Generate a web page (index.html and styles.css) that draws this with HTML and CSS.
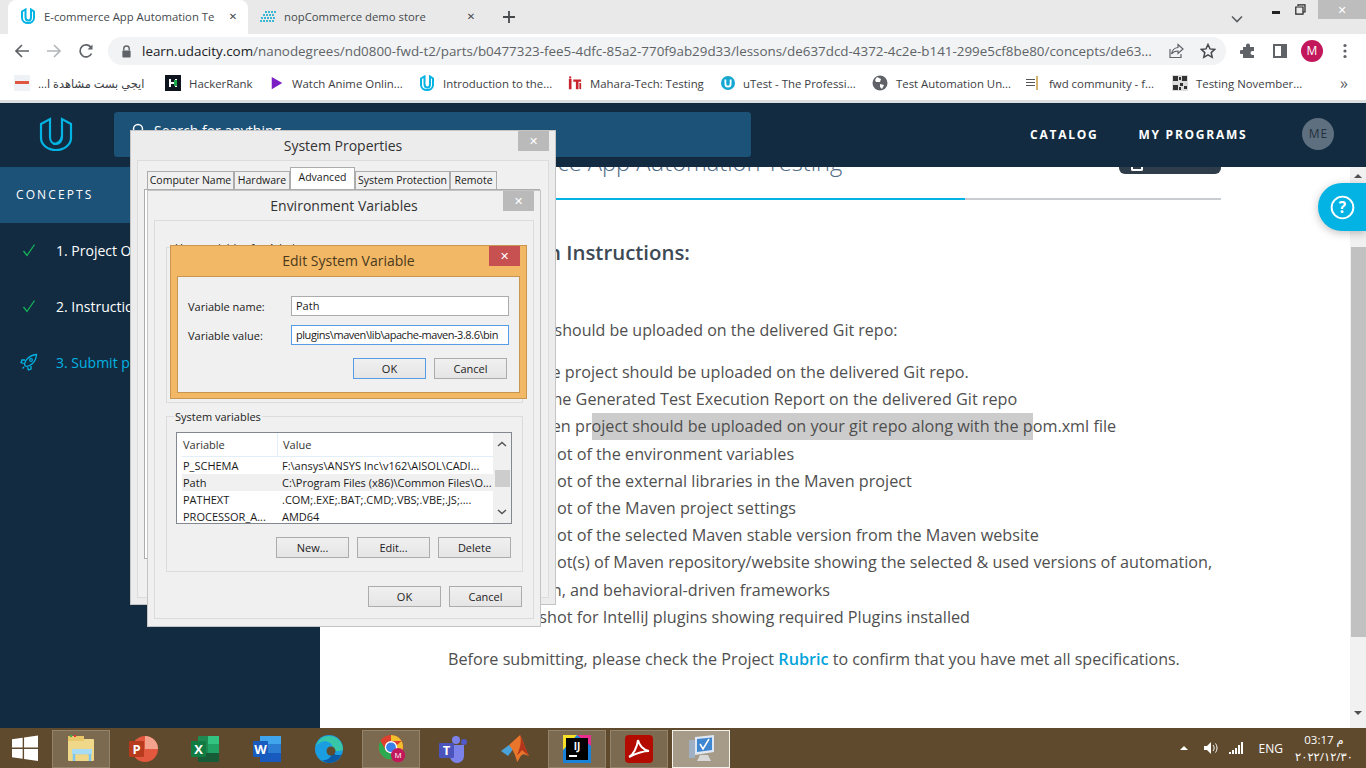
FILE: index.html
```html
<!DOCTYPE html>
<html lang="en">
<head>
<meta charset="utf-8">
<title>E-commerce App Automation Testing</title>
<link rel="stylesheet" href="styles.css">
</head>
<body>
<div class="screen">
  <div class="tabstrip">
    <div class="tab active">
      <svg class="fav" viewBox="0 0 16 16"><path d="M2 3.500 5.500 1.500V9c0 2 1.200 3.500 3 3.500S11 11.500 11 9V1.500L14 3.500V10c0 3-2.800 5-6 5s-6-2-6-5Z" fill="none" stroke="#02b3e4" stroke-width="2"/></svg>
      <span class="tabtitle">E-commerce App Automation Te</span>
      <span class="tabx">✕</span>
    </div>
    <div class="tab">
      <svg class="fav" viewBox="0 0 16 16"><g fill="#3cb8d4"><rect x="5" y="3" width="2" height="2"/><rect x="8" y="3" width="2" height="2"/><rect x="11" y="3" width="2" height="2"/><rect x="14" y="3" width="2" height="2"/><rect x="3" y="6" width="2" height="2"/><rect x="6" y="6" width="2" height="2"/><rect x="9" y="6" width="2" height="2"/><rect x="12" y="6" width="2" height="2"/><rect x="1" y="9" width="2" height="2"/><rect x="4" y="9" width="2" height="2"/><rect x="7" y="9" width="2" height="2"/><rect x="10" y="9" width="2" height="2"/><rect x="13" y="9" width="2" height="2"/><rect x="0" y="12" width="2" height="2"/><rect x="3" y="12" width="2" height="2"/><rect x="6" y="12" width="2" height="2"/><rect x="9" y="12" width="2" height="2"/><rect x="12" y="12" width="2" height="2"/></g></svg>
      <span class="tabtitle">nopCommerce demo store</span>
      <span class="tabx">✕</span>
    </div>
    <svg class="newtab" viewBox="0 0 14 14"><path d="M7 1v12M1 7h12" stroke="#45494d" stroke-width="1.800"/></svg>
    <div class="winctl">
      <svg class="chev" viewBox="0 0 12 8"><path d="M1 1.500 6 6.500 11 1.500" fill="none" stroke="#5a5d60" stroke-width="1.600"/></svg>
      <span class="minbtn"></span>
      <svg class="restore" viewBox="0 0 11 11"><path d="M3 2V.8H10V8H8.500M.8 3H8V10.200H.8Z" fill="none" stroke="#222" stroke-width="1.200"/></svg>
      <span class="closebtn">✕</span>
    </div>
  </div>

  <div class="toolbar">
    <svg class="tool" viewBox="0 0 16 16"><path d="M15 8H2M8 2 2 8l6 6" fill="none" stroke="#5f6368" stroke-width="1.700"/></svg>
    <svg class="tool" viewBox="0 0 16 16"><path d="M1 8h13M8 2l6 6-6 6" fill="none" stroke="#b4b7ba" stroke-width="1.700"/></svg>
    <svg class="tool" viewBox="0 0 16 16"><path d="M13.500 10.500A6 6 0 1 1 13 4.500" fill="none" stroke="#5f6368" stroke-width="1.700"/><path d="M14.500 1.500v5h-5Z" fill="#5f6368"/></svg>
    <div class="omnibox">
      <svg class="lock" viewBox="0 0 12 14"><path d="M3 6V4a3 3 0 0 1 6 0v2" fill="none" stroke="#5f6368" stroke-width="1.500"/><rect x="1.500" y="6" width="9" height="7.500" rx="1" fill="#5f6368"/></svg>
      <span class="url"><b>learn.udacity.com</b>/nanodegrees/nd0800-fwd-t2/parts/b0477323-fee5-4dfc-85a2-770f9ab29d33/lessons/de637dcd-4372-4c2e-b141-299e5cf8be80/concepts/de63...</span>
      <svg class="omni-ic" viewBox="0 0 16 16"><path d="M10 1.500 15 6l-5 4.500V8C7 8 5 9 3.500 11 4 7.500 6 5 10 4.500ZM2 6v8.500h11V11" fill="none" stroke="#5f6368" stroke-width="1.200"/></svg>
      <svg class="omni-ic" viewBox="0 0 16 16"><path d="m8 1.500 2 4.400 4.800.5-3.600 3.200 1 4.700L8 11.900l-4.200 2.400 1-4.700L1.200 6.400 6 5.900Z" fill="none" stroke="#45494d" stroke-width="1.500"/></svg>
    </div>
    <svg class="tool ext" viewBox="0 0 16 16"><path d="M6 2.500a2 2 0 0 1 4 0V4h4v4h-1.500a2 2 0 0 0 0 4H14v3H3v-4H1.500a2 2 0 0 1 0-4H3V4h3Z" fill="#5f6368"/></svg>
    <svg class="tool" viewBox="0 0 16 16"><rect x="2" y="2" width="12" height="12" fill="none" stroke="#5f6368" stroke-width="2"/><rect x="9" y="2" width="5" height="12" fill="#5f6368"/></svg>
    <span class="profile">M</span>
    <svg class="tool dots" viewBox="0 0 4 16"><circle cx="2" cy="2.500" r="1.600" fill="#5f6368"/><circle cx="2" cy="8" r="1.600" fill="#5f6368"/><circle cx="2" cy="13.500" r="1.600" fill="#5f6368"/></svg>
  </div>

  <div class="bookmarks">
    <div class="bm"><svg class="bmi" viewBox="0 0 16 16"><rect width="16" height="16" fill="#eef1f5"/><rect x="1" y="6" width="14" height="3" fill="#e0553f"/></svg><span dir="rtl">ايجي بست مشاهدة ا...</span></div>
    <div class="bm"><svg class="bmi" viewBox="0 0 16 16"><rect width="16" height="16" fill="#0e141e"/><path d="M4 4h2v8H4zM10 4h2v8h-2zM6 7h4v2H6z" fill="#fff"/><rect x="9" y="5" width="3" height="6" fill="#1ba94c"/></svg><span>HackerRank</span></div>
    <div class="bm"><svg class="bmi nar" viewBox="0 0 16 16"><path d="M2 1 14 8 2 15Z" fill="#7b1fc4"/></svg><span>Watch Anime Onlin...</span></div>
    <div class="bm"><svg class="bmi" viewBox="0 0 16 16"><path d="M2 3.500 5.500 1.500V9c0 2 1.200 3.500 3 3.500S11 11.500 11 9V1.500L14 3.500V10c0 3-2.800 5-6 5s-6-2-6-5Z" fill="none" stroke="#02b3e4" stroke-width="2"/></svg><span>Introduction to the...</span></div>
    <div class="bm"><svg class="bmi nar" viewBox="0 0 16 16"><path d="M1 3h3v12H1zM6 4h9v2.500h-3V15H9V6.500H6z" fill="#c8232c"/><circle cx="2.500" cy="1.500" r="1.300" fill="#c8232c"/><rect x="13" y="8" width="2" height="7" fill="#c8232c"/></svg><span>Mahara-Tech: Testing</span></div>
    <div class="bm"><svg class="bmi nar" viewBox="0 0 16 16"><circle cx="8" cy="8" r="8" fill="#16a7d1"/><path d="M5 4v5c0 2 1.300 3 3 3s3-1 3-3V4" fill="none" stroke="#fff" stroke-width="2"/></svg><span>uTest - The Professi...</span></div>
    <div class="bm"><svg class="bmi" viewBox="0 0 16 16"><circle cx="8" cy="8" r="7.500" fill="#5f6368"/><path d="M5 2 9 4 8 7 4 7 3 5ZM8 9l4 1-2 4-2-2Z" fill="#fff"/></svg><span>Test Automation Un...</span></div>
    <div class="bm"><svg class="bmi" viewBox="0 0 16 16"><path d="M1 4h9v1H1zM1 7h9v1H1zM1 10h9v1H1z" fill="#555"/><path d="M12 1v14" stroke="#c69a3c" stroke-width="1.500"/></svg><span>fwd community - f...</span></div>
    <div class="bm"><svg class="bmi" viewBox="0 0 16 16"><rect width="16" height="16" fill="#ddd"/><path d="M1 1h5v5H1zM10 1h5v5h-5zM1 10h5v5H1zM8 8h3v3H8zM12 11h3v3h-3zM7 2h2v3H7zM7 12h2v3H7z" fill="#333"/></svg><span>Testing November...</span></div>
    <span class="more">»</span>
  </div>

  <div class="page">
    <header class="apphead">
      <svg class="logo" viewBox="0 0 34 36"><path d="M2 8 11 3V21c0 4 2.500 7 6 7s6-3 6-7V3L32 8V22c0 7-7 12-15 12S2 29 2 22Z" fill="none" stroke="#02b3e4" stroke-width="2.200"/><path d="M23 20c-1 5-4 8-9 8" fill="none" stroke="#02b3e4" stroke-width="2"/></svg>
      <div class="search"><svg class="sicon" viewBox="0 0 14 14"><circle cx="6" cy="6" r="4.500" fill="none" stroke="#fff" stroke-width="1.500"/></svg><span>Search for anything</span></div>
      <nav class="topnav"><span>CATALOG</span><span>MY PROGRAMS</span></nav>
      <span class="avatar">ME</span>
    </header>
    <div class="below">
      <aside class="side">
        <div class="sidehead">CONCEPTS</div>
        <div class="sideitem"><svg class="sideic" viewBox="0 0 14 14"><path d="M1.500 8 5 12.500 12.500 1.500" fill="none" stroke="#15b45a" stroke-width="1.300"/></svg><span>1. Project Overview</span></div>
        <div class="sideitem"><svg class="sideic" viewBox="0 0 14 14"><path d="M1.500 8 5 12.500 12.500 1.500" fill="none" stroke="#15b45a" stroke-width="1.300"/></svg><span>2. Instructions</span></div>
        <div class="sideitem now"><svg class="sideic rocket" viewBox="0 0 18 18"><path d="M5 13C3.500 9 8 2.500 16.500 1.500 16 9.500 9.500 14.500 5 13ZM5 7H2L1 9.500 3.800 10.500M11 13v3l-2.500 1-1-2.800M4 14 2.500 15.500" fill="none" stroke="#02b3e4" stroke-width="1.300"/><circle cx="11" cy="7" r="1.400" fill="none" stroke="#02b3e4" stroke-width="1.100"/></svg><span>3. Submit project</span></div>
      </aside>
      <main class="content">
        <div class="column">
          <div class="titlerow">
            <span class="lessontitle">E-commerce App Automation Testing</span>
            <span class="darkbtn"><i class="btnmark"></i></span>
          </div>
          <div class="progress"><div class="progressfill"></div></div>
          <h2 class="heading">Submission Instructions:</h2>
          <p class="lead">The following should be uploaded on the delivered Git repo:</p>
          <ul class="reqs">
            <li class="firstreq">The whole project should be uploaded on the delivered Git repo.</li>
            <li>Upload the Generated Test Execution Report on the delivered Git repo</li>
            <li>The Maven pr<mark class="sel">oject should be uploaded on your git repo along with the p</mark>om.xml file</li>
            <li>Screenshot of the environment variables</li>
            <li>Screenshot of the external libraries in the Maven project</li>
            <li>Screenshot of the Maven project settings</li>
            <li>Screenshot of the selected Maven stable version from the Maven website</li>
            <li>Screenshot(s) of Maven repository/website showing the selected &amp; used versions of automation, validation, and behavioral-driven frameworks</li>
            <li>Screenshot for IntelliJ plugins showing required Plugins installed</li>
          </ul>
          <p class="closing">Before submitting, please check the Project <b class="rubric">Rubric</b><span class="after"> to confirm that you have met all specifications.</span></p>
        </div>
        <div class="scrollbar"><span class="sarrow up"></span><span class="sthumb"></span><span class="sarrow down"></span></div>
      </main>
    </div>
    <div class="fab"><svg viewBox="0 0 26 26"><circle cx="13" cy="13" r="11.300" fill="none" stroke="#fff" stroke-width="2"/><text x="13" y="18.500" text-anchor="middle" class="fabq">?</text></svg></div>
  </div>

  <footer class="taskbar">
    <svg class="start" viewBox="0 0 28 28"><path d="M0 4.500 11.500 3v10.500H0ZM13 2.700 28 .5v13H13ZM0 15h11.500v10.500L0 24ZM13 15h15v13L13 25.800Z" fill="#fff"/></svg>
    <div class="tb on"><svg viewBox="0 0 30 30"><rect x="2" y="5" width="26" height="22" rx="1" fill="#f0d88a"/><rect x="2" y="2" width="16" height="5" fill="#e8c66a"/><rect x="4" y="1" width="2" height="2" fill="#3cb043"/><rect x="8" y="1" width="2" height="2" fill="#d33"/><path d="M8 19h16M8 27v-8h3M24 27v-8h-3" fill="none" stroke="#7cc6ee" stroke-width="2.500"/><rect x="6" y="15" width="20" height="5" fill="#a8dcf5"/></svg></div>
    <div class="tb"><svg viewBox="0 0 30 30"><circle cx="17" cy="15" r="13" fill="#e2583e"/><path d="M17 2a13 13 0 0 1 13 13H17Z" fill="#f3a28d"/><rect x="1" y="7" width="15" height="16" rx="1" fill="#b83b1d"/><text x="8.500" y="20" class="tbl">P</text></svg></div>
    <div class="tb"><svg viewBox="0 0 30 30"><rect x="8" y="2" width="21" height="26" rx="1" fill="#1f8a52"/><rect x="18" y="2" width="11" height="8" fill="#33c481"/><rect x="18" y="10" width="11" height="9" fill="#21a366"/><rect x="8" y="19" width="21" height="9" fill="#185c37"/><rect x="1" y="7" width="15" height="16" rx="1" fill="#107c41"/><text x="8.500" y="20" class="tbl">X</text></svg></div>
    <div class="tb"><svg viewBox="0 0 30 30"><rect x="8" y="2" width="21" height="26" rx="1" fill="#2b7cd3"/><rect x="8" y="2" width="21" height="8" fill="#41a5ee"/><rect x="8" y="19" width="21" height="9" fill="#185abd"/><rect x="1" y="7" width="15" height="16" rx="1" fill="#185abd"/><text x="8.500" y="20" class="tbl">W</text></svg></div>
    <div class="tb"><svg viewBox="0 0 30 30"><circle cx="15" cy="15" r="14" fill="#1b9de2"/><path d="M29 16c0-8-6-14-14-14C7 2 4 7 2 12c4-5 10-6 14-3 3 2 3 5 2 6 2 2 7 3 11 1Z" fill="#37c6a8"/><path d="M18 15c0 4 3 6 6 6 2 0 3 0 4-1-2 5-7 9-13 9-3 0-5-1-7-3 5 1 11-2 10-11Z" fill="#0c59a4"/><circle cx="17" cy="17" r="4.500" fill="#5f4a2e"/></svg></div>
    <div class="tb on"><svg viewBox="0 0 30 34"><circle cx="15" cy="15" r="14" fill="#de3f2e"/><path d="M15 1a14 14 0 0 1 12 7H15Z" fill="#f2c02c"/><path d="M27 8a14 14 0 0 1-9 20L13 20Z" fill="#f2c02c"/><path d="M3 8a14 14 0 0 0 13 21L20 20H10Z" fill="#2da94f"/><circle cx="15" cy="15" r="7" fill="#fff"/><circle cx="15" cy="15" r="5.500" fill="#3b80ea"/><circle cx="23" cy="24" r="8" fill="#c2185b"/><text x="23" y="27.500" class="tbm">M</text></svg></div>
    <div class="tb"><svg viewBox="0 0 30 30"><circle cx="18" cy="6" r="4" fill="#7b83eb"/><circle cx="26" cy="8" r="3" fill="#5059c9"/><path d="M11 11h15v11a7 7 0 0 1-14 0Z" fill="#7b83eb"/><rect x="1" y="9" width="15" height="15" rx="1" fill="#4b53bc"/><text x="8.500" y="21" class="tbl">T</text></svg></div>
    <div class="tb"><svg viewBox="0 0 30 30"><path d="M1 17 9 11 14 14 8 22Z" fill="#4aa3d8"/><path d="M9 11 20 1c2 2 5 14 9 21-3-1-5-3-7-1-2 1-3 5-5 7-1-5-3-11-8-17Z" fill="#e8752a"/><path d="M20 1c2 6 0 14-3 20 2-1 3-3 5-5 2 2 5 4 7 6-4-7-7-19-9-21Z" fill="#b5341c"/></svg></div>
    <div class="tb on"><svg viewBox="0 0 30 30"><rect x="1" y="1" width="28" height="28" fill="#1a82d8"/><path d="M1 1h28L29 12 15 1Z" fill="#e82f8e"/><path d="M1 1h14L1 16Z" fill="#f8e02a"/><rect x="4" y="4" width="22" height="22" fill="#000"/><text x="15" y="16" class="tbij">IJ</text><rect x="7" y="21" width="8" height="2" fill="#fff"/></svg></div>
    <div class="tb on"><svg viewBox="0 0 30 30"><rect x="1" y="1" width="28" height="28" rx="4" fill="#b30b00"/><path d="M5 23c4-2 8-9 9-17 1 5 5 10 11 11-6 0-12 2-20 6Z" fill="none" stroke="#fff" stroke-width="2"/></svg></div>
    <div class="tb on lit"><svg viewBox="0 0 30 30"><path d="M9 3 28 1v17L9 21Z" fill="#dfe8f2"/><path d="M11 5 26 3.500V16L11 18Z" fill="#3e86d0"/><path d="m14 10 3 5 6-10" fill="none" stroke="#fff" stroke-width="1.500"/><path d="M3 6h6v18H3Z" fill="#9fb0c4"/><path d="M14 21h8l3 6H11Z" fill="#d8d8d8"/></svg></div>
    <div class="tray">
      <span class="trayup"></span>
      <svg class="trayic" viewBox="0 0 16 14"><path d="M1 5h3l4-4v12L4 9H1Z" fill="#fff"/><path d="M10 4c1.500 2 1.500 4 0 6M12.500 2.500c2 3 2 6 0 9" fill="none" stroke="#fff"/></svg>
      <svg class="trayic" viewBox="0 0 16 14"><path d="M1 11h2v2H1zM4 9h2v4H4zM7 7h2v6H7zM10 4h2v9h-2zM13 1h2v12h-2z" fill="#fff"/></svg>
      <span class="lang">ENG</span>
      <div class="clock"><span dir="rtl">م 03:17</span><span>٢٠٢٢/١٢/٣٠</span></div>
    </div>
  </footer>

  <section class="win props">
    <div class="wintitle"><span>System Properties</span><span class="wx grey">✕</span></div>
    <div class="propbody">
      <div class="tabs">
        <span class="wtab cn">Computer Name</span><span class="wtab hw">Hardware</span><span class="wtab sel">Advanced</span><span class="wtab sp">System Protection</span><span class="wtab rm">Remote</span>
      </div>
      <div class="tabpanel"></div>
    </div>
  </section>

  <section class="win env">
    <div class="wintitle"><span>Environment Variables</span><span class="wx grey">✕</span></div>
    <div class="envbody">
      <div class="group usergroup"><span class="legend">User variables for Admin</span></div>
      <div class="group sysgroup">
        <span class="legend">System variables</span>
        <div class="listbox">
          <div class="listmain">
            <div class="lrow lhead"><span class="c1">Variable</span><span class="c2">Value</span></div>
            <div class="lrow"><span class="c1">P_SCHEMA</span><span class="c2">F:\ansys\ANSYS Inc\v162\AISOL\CADI...</span></div>
            <div class="lrow hl"><span class="c1">Path</span><span class="c2">C:\Program Files (x86)\Common Files\O...</span></div>
            <div class="lrow"><span class="c1">PATHEXT</span><span class="c2">.COM;.EXE;.BAT;.CMD;.VBS;.VBE;.JS;....</span></div>
            <div class="lrow"><span class="c1">PROCESSOR_A...</span><span class="c2">AMD64</span></div>
          </div>
          <div class="lscroll">
            <svg viewBox="0 0 10 6"><path d="M1 5 5 1.500 9 5" fill="none" stroke="#555" stroke-width="1.500"/></svg>
            <span class="lthumb"></span>
            <svg viewBox="0 0 10 6"><path d="M1 1 5 4.500 9 1" fill="none" stroke="#555" stroke-width="1.500"/></svg>
          </div>
        </div>
        <div class="btnrow sysbtns"><span class="wbtn">New...</span><span class="wbtn">Edit...</span><span class="wbtn">Delete</span></div>
      </div>
      <div class="btnrow envbtns"><span class="wbtn">OK</span><span class="wbtn">Cancel</span></div>
    </div>
  </section>

  <section class="win edit">
    <div class="wintitle edittitle"><span>Edit System Variable</span><span class="wx red">✕</span></div>
    <div class="editbody">
      <div class="field"><label>Variable name:</label><span class="input">Path</span></div>
      <div class="field"><label>Variable value:</label><span class="input focus tight">plugins\maven\lib\apache-maven-3.8.6\bin</span></div>
      <div class="btnrow editbtns"><span class="wbtn def">OK</span><span class="wbtn">Cancel</span></div>
    </div>
  </section>
</div>
</body>
</html>
```
FILE: styles.css
```css
* { box-sizing: border-box; }
html, body { margin: 0; height: 100%; overflow: hidden; }
body { font-family: "Open Sans", "DejaVu Sans", sans-serif; color: #333; }
.screen { position: relative; width: 1366px; height: 768px; display: flex; flex-direction: column; overflow: hidden; background: #fff; }

/* browser chrome */
.tabstrip { height: 34px; background: #e9e9e9; display: flex; align-items: stretch; padding-left: 8px; font-size: 11.300px; flex: none; }
.tab { width: 240px; display: flex; align-items: center; padding: 0 8px 2px 12px; gap: 8px; color: #45494d; }
.tab.active { background: #fff; border-radius: 8px 8px 0 0; }
.tab + .tab { width: 238px; }
.fav { width: 16px; height: 16px; flex: none; }
.tabtitle { flex: 1; white-space: nowrap; overflow: hidden; }
.tabx { font-size: 10px; color: #45494d; width: 14px; text-align: center; }
.newtab { width: 14px; height: 14px; align-self: center; margin-left: 16px; }
.winctl { margin-left: auto; display: flex; align-items: flex-start; }
.chev { width: 12px; height: 8px; margin: 15px 29px 0 0; }
.minbtn { width: 8px; height: 3px; background: #222; margin: 11px 15px 0 0; }
.restore { width: 11px; height: 11px; margin: 4px 12px 0 0; }
.closebtn { width: 48px; height: 19px; background: #bdbdbd; color: #fff; font-size: 11px; text-align: center; line-height: 19px; }
.toolbar { height: 34px; background: #fff; display: flex; align-items: center; padding-left: 14px; flex: none; }
.tool { width: 16px; height: 16px; margin-right: 16px; flex: none; }
.omnibox { width: 1118px; height: 28px; margin-left: -2px; background: #f1f3f4; border-radius: 14px; display: flex; align-items: center; padding: 0 10px 0 13px; flex: none; }
.lock { width: 11px; height: 13px; margin-right: 10px; flex: none; }
.url { flex: 1; font-size: 13.400px; color: #5f6368; white-space: nowrap; overflow: hidden; }
.url b { font-weight: 400; color: #202124; }
.omni-ic { width: 16px; height: 16px; margin-left: 16px; flex: none; }
.ext { margin-left: 14px; }
.profile { width: 22px; height: 22px; border-radius: 50%; background: #c2185b; color: #fff; font-size: 12px; text-align: center; line-height: 22px; margin: 0 20px 0 -3px; flex: none; }
.dots { width: 4px; }
.bookmarks { height: 32px; padding: 0 0 2px 14px; background: #fff; display: grid; grid-template-columns: 151px 105px 149px 149px 153px 151px 153px 147px 168px 26px; align-items: center; font-size: 11.400px; color: #3c4043; flex: none; }
.bm { display: flex; align-items: center; gap: 8px; white-space: nowrap; }
.bmi { width: 16px; height: 16px; flex: none; }
.bmi.nar { width: 14px; height: 14px; }
.more { font-size: 16px; color: #5f6368; }

/* page */
.page { flex: 1; position: relative; display: flex; flex-direction: column; border-top: 3px solid #dcdfe1; min-height: 0; }
.apphead { height: 64px; padding-bottom: 2px; background: #122b40; display: flex; align-items: center; position: relative; z-index: 2; flex: none; }
.logo { width: 34px; height: 36px; margin-left: 39px; flex: none; }
.search { width: 639px; height: 47px; margin-left: 40px; background: #1c5178; border-radius: 4px; display: flex; align-items: center; padding: 0 0 8px 18px; color: #fff; font-size: 14px; gap: 8px; border: 1px solid #10293c; }
.sicon { width: 14px; height: 14px; }
.topnav { display: flex; gap: 40px; margin-left: 278px; color: #fff; font-weight: 700; font-size: 12px; letter-spacing: 1.750px; }
.avatar { width: 32px; height: 32px; margin-left: 55px; border-radius: 50%; background: #5e6f7f; color: #24313e; font-size: 12px; letter-spacing: 1px; text-align: center; line-height: 32px; }
.below { flex: 1; display: flex; min-height: 0; }
.side { width: 320px; background: #122b40; color: #fff; flex: none; }
.sidehead { height: 56px; background: #1c5178; padding-left: 16px; font-size: 12px; font-weight: 400; letter-spacing: 2.100px; line-height: 56px; }
.sideitem { height: 56px; display: flex; align-items: center; padding: 0 0 2px 22px; gap: 20px; font-size: 14px; }
.sideic { width: 14px; height: 14px; flex: none; }
.rocket { width: 18px; height: 18px; margin: 0 -2px 0 -2px; }
.now { color: #02b3e4; }
.content { flex: 1; display: flex; min-width: 0; overflow: visible; }
.column { flex: 1; padding: 0 129px 0 128px; min-width: 0; }
.titlerow { display: flex; justify-content: space-between; height: 32px; margin-top: -17px; }
.lessontitle { font-size: 23.600px; font-weight: 300; color: #4f6a84; line-height: 25px; white-space: nowrap; }
.darkbtn { width: 102px; height: 24px; background: #2e3d49; border-radius: 0 0 6px 6px; position: relative; }
.btnmark { position: absolute; left: 12px; bottom: 3px; width: 12px; height: 6px; border: 2px solid #fff; border-top: 0; border-radius: 0 0 2px 2px; }
.progress { height: 2px; background: #c9cdd1; margin-top: 16px; }
.progressfill { height: 2px; width: 517px; background: #02b3e4; }
.heading { font-size: 20.400px; font-weight: 600; color: #3d4a55; margin: 38px 0 0; line-height: 28px; }
.lead { font-size: 16px; line-height: 27px; color: #4f4f4f; margin: 51px 0 0 3px; }
.reqs { margin: 15px 0 0; padding: 0 0 0 40px; list-style: none; font-size: 16.200px; line-height: 27.200px; color: #4f4f4f; }
.firstreq { text-indent: -5px; }
.sel { background: #ccc; color: inherit; display: inline-block; height: 27px; }
.closing { font-size: 16.200px; line-height: 27px; color: #4f4f4f; margin: 15px 0 0; }
.after { font-size: 16px; }
.rubric { color: #02a3da; font-weight: 600; }
.scrollbar { width: 16px; background: #f1f1f1; display: flex; flex-direction: column; align-items: center; position: relative; z-index: 3; margin-top: 0; }
.sthumb { width: 15px; height: 390px; background: #c1c1c1; margin-top: 69px; }
.sarrow { width: 0; height: 0; border-left: 4px solid transparent; border-right: 4px solid transparent; }
.sarrow.up { border-bottom: 4px solid #505050; margin-top: 7px; }
.sarrow.down { border-top: 4px solid #505050; margin-top: 74px; }
.fab { position: absolute; right: 0; top: 80px; width: 48px; height: 48px; background: #02b3e4; border-radius: 24px 0 0 24px; display: flex; align-items: center; padding-left: 12px; box-shadow: 0 2px 8px rgba(0,0,0,.25); z-index: 4; }
.fab svg { width: 25px; height: 25px; }
.fabq { fill: #fff; font-size: 16px; font-weight: 700; }

/* taskbar */
.taskbar { height: 40px; background: #5f4a2e; display: flex; align-items: center; flex: none; padding-left: 52px; position: relative; gap: 4px; }
.start { position: absolute; left: 12px; top: 7px; width: 26px; height: 26px; }
.tb { width: 58px; height: 38px; display: flex; align-items: center; justify-content: center; margin-top: 2px; border: 1px solid transparent; }
.tb svg { width: 30px; height: 30px; }
.tb.on { background: #7c6a50; border-color: #92836d; }
.tb.lit { background: #a69a88; border-color: #f4f1ea; }
.tbl { fill: #fff; font-size: 13px; font-weight: 700; text-anchor: middle; }
.tbm { fill: #fff; font-size: 9px; text-anchor: middle; }
.tbij { fill: #fff; font-size: 10px; font-weight: 700; text-anchor: middle; }
.tray { margin-left: auto; display: flex; align-items: center; color: #fff; padding-right: 15px; }
.trayup { width: 0; height: 0; border-left: 4px solid transparent; border-right: 4px solid transparent; border-bottom: 4px solid #fff; margin-right: 15px; }
.trayic { width: 16px; height: 14px; margin-right: 9px; }
.lang { font-size: 12px; margin: 0 14px 0 6px; }
.clock { display: flex; flex-direction: column; align-items: center; font-size: 11.500px; line-height: 17px; width: 54px; }

/* windows desktop dialogs */
.win { position: absolute; z-index: 5; background: #f0f0f0; font-size: 11px; color: #1a1a1a; border: 1px solid #c4c4c4; }
.wintitle { height: 29px; display: flex; justify-content: center; align-items: center; font-size: 14px; color: #333; position: relative; }
.wx { position: absolute; top: 0; right: 6px; width: 31px; height: 20px; color: #fff; font-size: 11px; text-align: center; line-height: 20px; }
.wx.grey { background: #bababa; }
.wx.red { background: #c75050; }
.props { left: 130px; top: 130px; width: 426px; height: 475px; background: #ececec; }
.propbody { margin: 0 6px; background: #f0f0f0; border: 1px solid #dcdcdc; height: 438px; padding: 10px 9px 0; }
.tabs { display: flex; align-items: flex-end; height: 18px; }
.wtab { border: 1px solid #acacac; border-bottom: 0; height: 18px; line-height: 17px; text-align: center; font-size: 10.500px; background: #f0f0f0; white-space: nowrap; }
.wtab.cn { width: 87px; }
.wtab.hw { width: 56px; }
.wtab.sel { width: 65px; height: 22px; line-height: 18px; background: #fff; }
.wtab.sp { width: 95px; }
.wtab.rm { width: 47px; }
.tabpanel { height: 370px; background: #fff; border: 1px solid #acacac; width: 396px; margin-left: -3px; }
.env { left: 147px; top: 190px; width: 394px; height: 437px; }
.envbody { margin: 0 6px; height: 399px; border: 1px solid #dcdcdc; padding: 26px 10px 0 11px; display: flex; flex-direction: column; }
.group { border: 1px solid #dcdcdc; position: relative; }
.usergroup { height: 156px; margin-bottom: 13px; }
.sysgroup { height: 156px; padding: 15px 10px 0 9px; }
.legend { position: absolute; left: 7px; top: -7px; background: #f0f0f0; padding: 0 1px; line-height: 13px; color: #222; }
.listbox { height: 92px; width: 336px; display: flex; border: 1px solid #828790; background: #fff; }
.listmain { width: 316px; padding-left: 5px; overflow: hidden; }
.lrow { display: flex; height: 17px; line-height: 17px; white-space: nowrap; }
.lhead { height: 24px; line-height: 24px; border-bottom: 1px solid #e2eefa; color: #333; }
.lhead .c2 { border-left: 1px solid #e2eefa; }
.c1 { width: 95px; padding-left: 1px; flex: none; }
.c2 { padding-left: 5px; flex: 1; }
.hl { background: #f0f0f0; }
.lscroll { flex: 1; background: #f0f0f0; display: flex; flex-direction: column; align-items: center; padding-top: 8px; }
.lscroll svg { width: 10px; height: 6px; flex: none; }
.lthumb { width: 15px; height: 17px; background: #cdcdcd; margin: 23px 0 22px; }
.btnrow { display: flex; justify-content: flex-end; gap: 8px; }
.wbtn { width: 73px; height: 21px; border: 1px solid #acacac; background: linear-gradient(#f0f0f0, #e5e5e5); text-align: center; line-height: 19px; font-size: 11px; color: #222; }
.sysbtns { margin-top: 13px; padding-right: 1px; }
.envbtns { margin-top: 14px; padding-right: 1px; }
.edit { left: 170px; top: 245px; width: 357px; height: 154px; background: #f2b866; border-color: #c9964f; }
.edittitle { height: 30px; padding-bottom: 2px; color: #4a3a1c; }
.editbody { margin: 0 6px; height: 117px; background: #f0f0f0; border: 1px solid #c9964f; padding: 19px 9px 0 10px; }
.field { display: flex; align-items: center; height: 20px; margin-bottom: 9px; }
.field label { width: 103px; flex: none; }
.input { width: 218px; height: 20px; background: #fff; border: 1px solid #acacac; line-height: 18px; padding-left: 4px; white-space: nowrap; overflow: hidden; }
.input.focus { border-color: #569de5; }
.tight { letter-spacing: -.45px; }
.editbtns { margin-top: 13px; padding-right: 3px; }
.wbtn.def { border-color: #569de5; }
```
